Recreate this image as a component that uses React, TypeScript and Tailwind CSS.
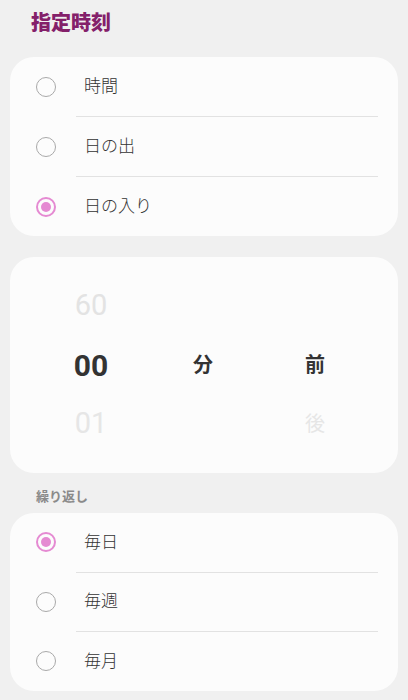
const font = "font-['Roboto','Noto_Sans_CJK_JP',sans-serif]";

function Radio({ checked }: { checked: boolean }) {
  return checked ? (
    <span className="flex h-[20px] w-[20px] items-center justify-center rounded-full border-2 border-[#e58ad2]">
      <span className="h-[10px] w-[10px] rounded-full bg-[#e58ad2]" />
    </span>
  ) : (
    <span className="h-[20px] w-[20px] rounded-full border-[1.5px] border-[#a9a9a9]" />
  );
}

function OptionCard({ items, selected, rowH }: { items: string[]; selected: number; rowH: string }) {
  return (
    <div className="rounded-[24px] bg-[#fcfcfc]">
      {items.map((label, i) => (
        <div key={label}>
          {i > 0 && <div className="ml-[66px] mr-[20px] h-px bg-[#e2e2e2]" />}
          <div className={`flex items-center pl-[26px] ${rowH}`}>
            <Radio checked={i === selected} />
            <span className="ml-[28px] text-[17px] font-light text-[#333]">{label}</span>
          </div>
        </div>
      ))}
    </div>
  );
}

export default function App() {
  return (
    <div className={`min-h-[700px] bg-[#f0f0f0] px-[10px] ${font}`}>
      <h1 className="pl-[21px] pt-[10px] pb-[21px] text-[20px] font-black leading-[26px] text-[#84206a]">
        指定時刻
      </h1>

      <OptionCard items={["時間", "日の出", "日の入り"]} selected={2} rowH="h-[59px]" />

      {/* minute picker */}
      <div className="mt-[21px] rounded-[24px] bg-[#fcfcfc] py-[19.5px] pl-[25px] pr-[27px]">
        <div className="grid grid-cols-3 grid-rows-[59px_59px_59px] items-center text-center">
          <span className="text-[29px] text-[#e3e3e3]">60</span>
          <span />
          <span />
          <span className="text-[30px] font-bold text-[#333]">00</span>
          <span className="text-[20px] font-bold text-[#333]">分</span>
          <span className="text-[20px] font-bold text-[#333]">前</span>
          <span className="text-[29px] text-[#e6e6e6]">01</span>
          <span />
          <span className="text-[20px] text-[#e6e6e6]">後</span>
        </div>
      </div>

      <div className="pl-[26px] pt-[16px] pb-[8px] text-[13px] font-bold leading-[16px] text-[#8a8a8a]">
        繰り返し
      </div>

      <OptionCard items={["毎日", "毎週", "毎月"]} selected={0} rowH="h-[58.5px]" />
    </div>
  );
}
